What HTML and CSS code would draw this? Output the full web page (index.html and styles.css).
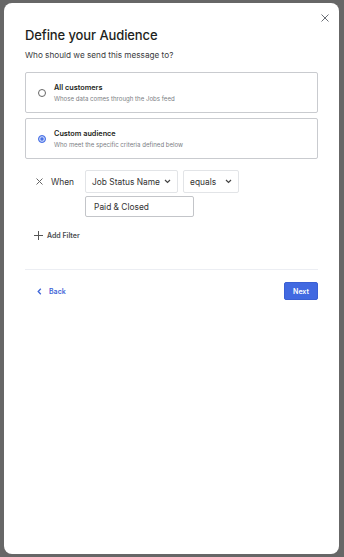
FILE: index.html
```html
<!DOCTYPE html>
<html lang="en">
<head>
  <meta charset="UTF-8">
  <title>Define your Audience</title>
  <link rel="stylesheet" href="styles.css">
</head>
<body>
  <div class="modal">
    <button class="close-btn" aria-label="Close">
      <svg width="8" height="8" viewBox="0 0 8 8"><path d="M0.5 0.5L7.5 7.5M7.5 0.5L0.5 7.5" stroke="#6b6f76" stroke-width="1"/></svg>
    </button>

    <h2 class="title">Define your Audience</h2>
    <p class="subtitle">Who should we send this message to?</p>

    <div class="choice">
      <span class="radio"></span>
      <div>
        <div class="choice-title">All customers</div>
        <div class="choice-desc">Whose data comes through the Jobs feed</div>
      </div>
    </div>

    <div class="choice">
      <span class="radio checked"></span>
      <div>
        <div class="choice-title">Custom audience</div>
        <div class="choice-desc">Who meet the specific criteria defined below</div>
      </div>
    </div>

    <div class="filter">
      <svg class="remove" width="7" height="7" viewBox="0 0 7 7"><path d="M0.5 0.5L6.5 6.5M6.5 0.5L0.5 6.5" stroke="#666" stroke-width="1"/></svg>
      <span class="when">When</span>
      <div class="fields">
        <div class="row">
          <div class="select wide">Job Status Name
            <svg width="7" height="5" viewBox="0 0 7 5"><path d="M1 1L3.5 3.5L6 1" fill="none" stroke="#444" stroke-width="1.2"/></svg>
          </div>
          <div class="select">equals
            <svg width="7" height="5" viewBox="0 0 7 5"><path d="M1 1L3.5 3.5L6 1" fill="none" stroke="#444" stroke-width="1.2"/></svg>
          </div>
        </div>
        <div class="value">Paid &amp; Closed</div>
      </div>
    </div>

    <div class="add-filter">
      <svg width="9" height="9" viewBox="0 0 9 9"><path d="M4.5 0V9M0 4.5H9" stroke="#555" stroke-width="1"/></svg>
      Add Filter
    </div>

    <div class="footer">
      <a class="back" href="#">
        <svg width="5" height="7" viewBox="0 0 5 7"><path d="M3.8 0.8L1.2 3.5L3.8 6.2" fill="none" stroke="#3f66d8" stroke-width="1.3"/></svg>
        Back
      </a>
      <button class="next">Next</button>
    </div>
  </div>
</body>
</html>
```

FILE: styles.css
```css
body { margin: 0; background: #676767; font-family: Inter, "Noto Sans", sans-serif; color: #222; }

.modal {
  position: relative;
  margin: 3px 5px 3px 4px;
  height: 551px;
  box-sizing: border-box;
  background: #fff;
  border-radius: 8px;
  padding: 24px 21px 0 21px;
}

.close-btn { position: absolute; top: 11px; right: 10px; background: none; border: none; padding: 0; cursor: pointer; line-height: 0; }

.title { margin: 0; font-size: 13px; font-weight: 500; letter-spacing: -0.1px; color: #1e1f21; line-height: 16px; }
.subtitle { margin: 7px 0 11px; font-size: 8.2px; color: #3a3b3e; line-height: 11px; }

.choice {
  display: flex;
  align-items: center;
  height: 41px;
  box-sizing: border-box;
  border: 1px solid #c9cbcf;
  border-radius: 2px;
  padding: 1px 0 0 12px;
  margin-bottom: 5px;
}
.radio {
  width: 6px; height: 6px;
  border: 1px solid #666;
  border-radius: 50%;
  margin-right: 8px;
  flex: none;
}
.radio.checked { border: 1px solid #4a72e6; background: #4a72e6; box-shadow: inset 0 0 0 1.3px #c9d6fb; }
.choice-title { font-size: 7.3px; font-weight: 600; color: #1e1f21; line-height: 11px; }
.choice-desc { font-size: 6.1px; color: #7b7e84; line-height: 11px; }

.filter { display: flex; align-items: flex-start; margin: 11px 0 0 11px; }
.remove { margin-top: 8px; flex: none; }
.when { font-size: 8.4px; color: #333; margin: 7px 11px 0 8px; }
.fields { display: flex; flex-direction: column; gap: 3px; }
.row { display: flex; gap: 5px; }
.select {
  display: flex; align-items: center; justify-content: space-between;
  height: 23px; box-sizing: border-box;
  border: 1px solid #e2e4e7; border-radius: 2px;
  padding: 0 6px 0 6px;
  font-size: 8.4px; color: #333;
  width: 56px;
}
.select.wide { width: 93px; }
.value {
  height: 21px; box-sizing: border-box; width: 109px;
  border: 1px solid #c3c5c9; border-radius: 2px;
  padding: 0 8px;
  display: flex; align-items: center;
  font-size: 8.4px; color: #333;
}

.add-filter { display: flex; align-items: center; gap: 4px; margin: 14px 0 0 9px; font-size: 7px; font-weight: 600; color: #4a4c50; }

.footer {
  margin-top: 29px;
  border-top: 1px solid #eceef3;
  padding-top: 12px;
  display: flex; align-items: center; justify-content: space-between;
}
.back { display: flex; align-items: center; gap: 7px; margin-left: 12px; font-size: 7px; font-weight: 600; color: #3f66d8; text-decoration: none; }
.next {
  background: #4169e1; color: #fff; border: 1px solid #3a5fd3; border-radius: 2px;
  width: 34px; height: 18px; padding: 0;
  font-family: inherit; font-size: 7px; font-weight: 600;
}
```
